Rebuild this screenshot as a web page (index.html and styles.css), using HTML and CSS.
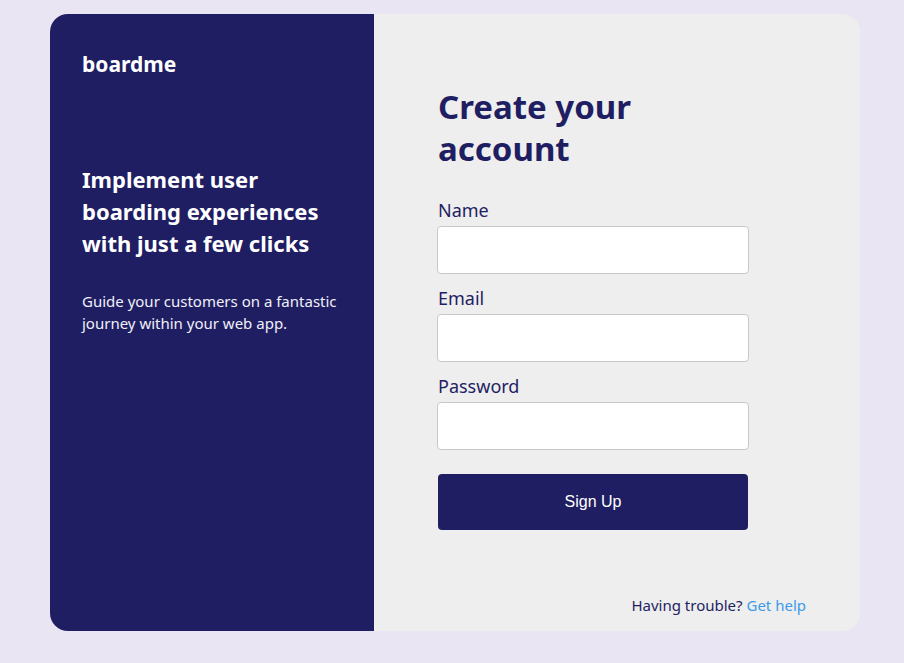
FILE: index.html
```html
<!DOCTYPE html>
<html lang="en">
<head>
<meta charset="utf-8">
<title>boardme - Create your account</title>
<link rel="stylesheet" href="styles.css">
</head>
<body>
<main class="card">
  <section class="intro">
    <div class="logo">boardme</div>
    <h2 class="tagline">Implement user boarding experiences with just a few clicks</h2>
    <p class="lead">Guide your customers on a fantastic journey within your web app.</p>
  </section>
  <section class="signup">
    <h1 class="title">Create your account</h1>
    <form class="form">
      <label class="field">
        <span class="label">Name</span>
        <input class="input" type="text">
      </label>
      <label class="field">
        <span class="label">Email</span>
        <input class="input" type="email">
      </label>
      <label class="field">
        <span class="label">Password</span>
        <input class="input" type="password">
      </label>
      <button class="btn" type="button">Sign Up</button>
    </form>
    <p class="help">Having trouble? <a href="#" class="link">Get help</a></p>
  </section>
</main>
</body>
</html>
```

FILE: styles.css
```css
* { box-sizing: border-box; }
html, body { margin: 0; }
body {
  background: #e9e5f3;
  padding: 14px 44px 32px 50px;
  font-family: "Noto Sans", "Open Sans", sans-serif;
  color: #1f1e63;
}
.card {
  display: grid;
  grid-template-columns: 324px 1fr;
  height: 617px;
  border-radius: 18px;
  overflow: hidden;
}
.intro {
  background: #1f1e63;
  color: #fff;
  padding: 36px 32px;
}
.logo {
  font-size: 21px;
  font-weight: 700;
  line-height: 28px;
}
.tagline {
  margin: 85px 0 0;
  font-size: 22px;
  font-weight: 700;
  line-height: 32px;
}
.lead {
  margin: 31px 0 0;
  font-size: 15px;
  line-height: 22px;
  color: #f0f0f8;
}
.signup {
  background: #eeeeee;
  padding: 72px 54px 15px 64px;
  display: flex;
  flex-direction: column;
}
.title {
  margin: 0;
  width: 310px;
  font-size: 33px;
  line-height: 42px;
  font-weight: 700;
  color: #1f1e63;
}
.form {
  width: 310px;
  margin-top: 24px;
  display: flex;
  flex-direction: column;
}
.field {
  display: flex;
  flex-direction: column;
  margin-bottom: 8px;
}
.label {
  font-size: 18px;
  line-height: 32px;
  color: #1f1e63;
}
.input {
  width: 312px;
  height: 48px;
  margin-left: -1px;
  border: 1px solid #c8c8c8;
  border-radius: 4px;
  background: #fff;
}
.btn {
  margin-top: 16px;
  height: 56px;
  border: 0;
  border-radius: 4px;
  background: #1f1e63;
  color: #fff;
  font-family: "Liberation Sans", Arial, sans-serif;
  font-size: 16px;
}
.help {
  margin: auto 0 0;
  text-align: right;
  font-size: 15px;
  line-height: 22px;
  color: #1f1e63;
}
.link {
  color: #3d9be9;
  text-decoration: none;
}
```
